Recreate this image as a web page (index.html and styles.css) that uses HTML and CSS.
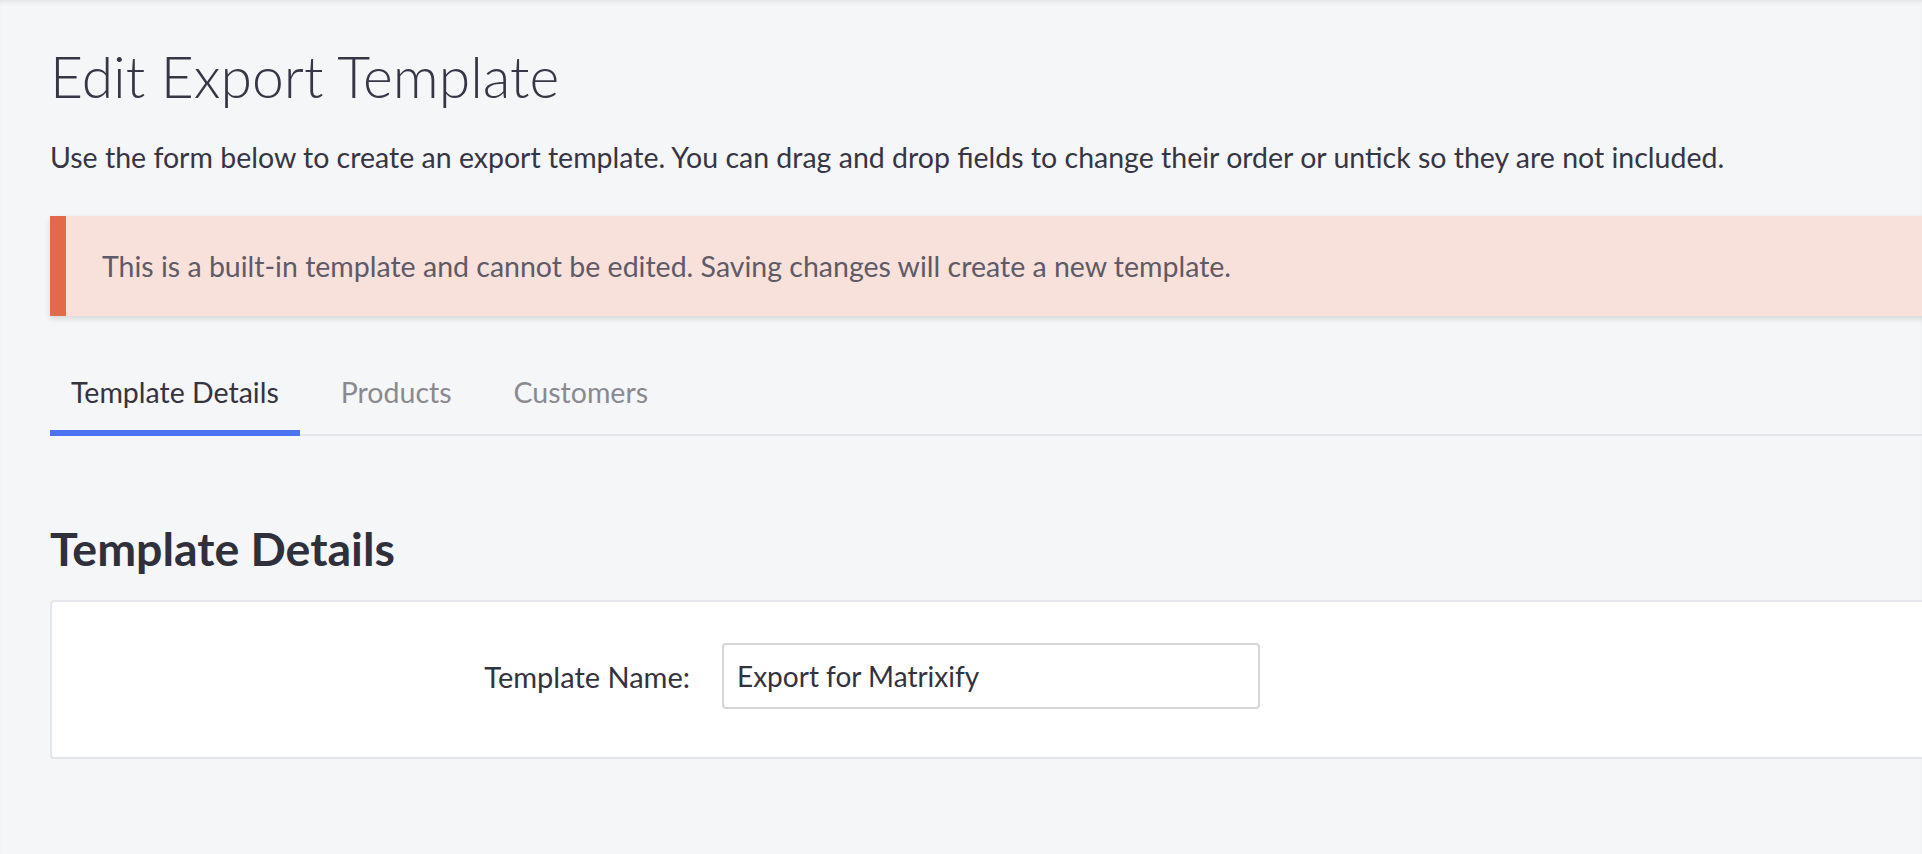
FILE: index.html
```html
<!DOCTYPE html>
<html lang="en">
<head>
    <meta charset="UTF-8">
    <meta name="viewport" content="width=device-width, initial-scale=1.0">
    <title>Edit Export Template</title>
    <link rel="stylesheet" href="styles.css">
</head>
<body>
    <div class="page">
        <div class="content">
            <h1 class="page-title">Edit Export Template</h1>
            <p class="intro">Use the form below to create an export template. You can drag and drop fields to change their order or untick so they are not included.</p>

            <div class="alert alert-warning">
                This is a built-in template and cannot be edited. Saving changes will create a new template.
            </div>

            <div class="tabs">
                <a href="#" class="tab active">Template Details</a>
                <a href="#" class="tab">Products</a>
                <a href="#" class="tab">Customers</a>
            </div>

            <h2 class="section-title">Template Details</h2>
            <div class="card">
                <div class="form-row">
                    <label for="template-name">Template Name:</label>
                    <input type="text" id="template-name" name="template-name" value="Export for Matrixify">
                </div>
            </div>
        </div>
    </div>
</body>
</html>
```

FILE: styles.css
```css
html, body {
    margin: 0;
    padding: 0;
}
body {
    font-family: Lato, "Open Sans", Arial, sans-serif;
    background-color: #f5f6f8;
    color: #34333f;
    overflow: hidden;
    height: 854px;
}
.page {
    padding: 40px 0 0 50px;
    height: 100%;
    box-sizing: border-box;
    box-shadow: inset 0 4px 4px -2px rgba(0, 0, 0, 0.08);
}
.content {
    width: 1950px;
}
.page-title {
    margin: 0;
    font-size: 57px;
    font-weight: 300;
    line-height: 72px;
    color: #373646;
}
.intro {
    margin: 25px 0 0 0;
    font-size: 28.5px;
    line-height: 40px;
    color: #363545;
}
.alert {
    margin-top: 39px;
    padding: 30px 0 30px 36px;
    font-size: 28.5px;
    line-height: 40px;
}
.alert-warning {
    background-color: #f8e1da;
    border-left: 16px solid #e06a4a;
    color: #5e5a67;
    box-shadow: 0 3px 6px rgba(0, 0, 0, 0.12);
}
.tabs {
    display: flex;
    gap: 20px;
    margin-top: 40px;
    border-bottom: 2px solid #e3e5eb;
}
.tab {
    display: block;
    padding: 16px 21px 18px;
    margin-bottom: -2px;
    font-size: 28.5px;
    line-height: 40px;
    color: #8a8991;
    text-decoration: none;
    border-bottom: 6px solid transparent;
}
.tab.active {
    color: #34333f;
    border-bottom-color: #4e73f2;
}
.section-title {
    margin: 84px 0 0 0;
    font-size: 46.5px;
    font-weight: 700;
    line-height: 56px;
    color: #302f3c;
}
.card {
    margin-top: 24px;
    background-color: #fff;
    border: 2px solid #e3e5eb;
    border-radius: 4px;
    padding: 41px 0 48px 0;
}
.form-row {
    display: grid;
    grid-template-columns: 638px 538px;
    column-gap: 32px;
    align-items: center;
}
.form-row label {
    text-align: right;
    font-size: 29px;
    color: #33323f;
}
.form-row input {
    height: 66px;
    box-sizing: border-box;
    padding: 0 13px;
    border: 2px solid #d6d6d8;
    border-radius: 4px;
    font-family: Lato, "Open Sans", Arial, sans-serif;
    font-size: 28px;
    color: #33323f;
    background-color: #fff;
}
```
